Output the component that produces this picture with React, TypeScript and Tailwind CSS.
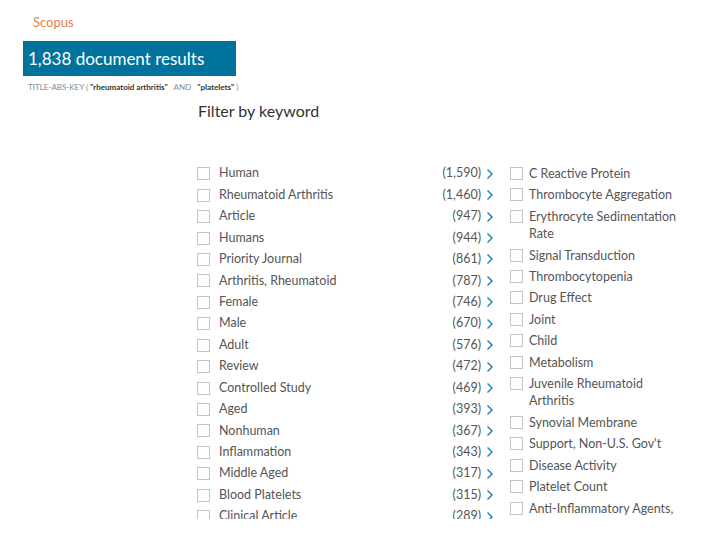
import React from "react";

const left: [string, string][] = [
  ["Human", "(1,590)"],
  ["Rheumatoid Arthritis", "(1,460)"],
  ["Article", "(947)"],
  ["Humans", "(944)"],
  ["Priority Journal", "(861)"],
  ["Arthritis, Rheumatoid", "(787)"],
  ["Female", "(746)"],
  ["Male", "(670)"],
  ["Adult", "(576)"],
  ["Review", "(472)"],
  ["Controlled Study", "(469)"],
  ["Aged", "(393)"],
  ["Nonhuman", "(367)"],
  ["Inflammation", "(343)"],
  ["Middle Aged", "(317)"],
  ["Blood Platelets", "(315)"],
  ["Clinical Article", "(289)"],
];

const right: string[][] = [
  ["C Reactive Protein"],
  ["Thrombocyte Aggregation"],
  ["Erythrocyte Sedimentation", "Rate"],
  ["Signal Transduction"],
  ["Thrombocytopenia"],
  ["Drug Effect"],
  ["Joint"],
  ["Child"],
  ["Metabolism"],
  ["Juvenile Rheumatoid", "Arthritis"],
  ["Synovial Membrane"],
  ["Support, Non-U.S. Gov't"],
  ["Disease Activity"],
  ["Platelet Count"],
  ["Anti-Inflammatory Agents,", "Non-Steroidal"],
];

function Box() {
  return <span className="block w-[13px] h-[13px] border border-[#c4c4c4] bg-white shrink-0" />;
}

function Chevron() {
  return (
    <svg width="8" height="12" viewBox="0 0 8 12" className="shrink-0">
      <polyline points="1.5,1.5 6,6 1.5,10.5" fill="none" stroke="#1b7fa3" strokeWidth="1.4" />
    </svg>
  );
}

export default function App() {
  return (
    <div className="w-[720px] h-[540px] bg-white overflow-hidden text-[#555]" style={{ fontFamily: "Lato, 'Open Sans', sans-serif" }}>
      <div className="pl-[33px] pt-[13px] text-[13px] leading-[18px] text-[#e0834a]">Scopus</div>
      <div className="ml-[23px] mt-[10px] w-[213px] h-[35px] bg-[#00739c] flex items-center pl-[5px] text-white text-[17px]">
        1,838 document results
      </div>
      <div className="ml-[28px] mt-[6px] text-[8px] leading-[10px] text-[#888] whitespace-pre">
        TITLE-ABS-KEY ( <span className="text-[#333] font-bold">"rheumatoid arthritis"</span>   AND   <span className="text-[#333] font-bold">"platelets"</span> )
      </div>
      <div className="ml-[198px] mt-[9px] text-[16px] leading-[20px] text-[#333]">Filter by keyword</div>
      <div className="ml-[197px] mt-[42px] h-[356px] overflow-hidden flex">
        <div className="w-[300px] flex flex-col">
          {left.map(([name, count]) => (
            <div key={name} className="h-[21.45px] flex items-center text-[12.5px] shrink-0">
              <Box />
              <span className="ml-[9px] flex-1">{name}</span>
              <span>{count}</span>
              <span className="ml-[5px] mr-[3px]"><Chevron /></span>
            </div>
          ))}
        </div>
        <div className="ml-[13px] flex flex-col">
          {right.map((lines) => (
            <div key={lines[0]} className="flex items-start py-[2px] text-[12.5px] leading-[17.4px] shrink-0">
              <span className="mt-[2px]"><Box /></span>
              <span className="ml-[6px] whitespace-nowrap">
                {lines.map((l, i) => (
                  <span key={i} className="block">{l}</span>
                ))}
              </span>
            </div>
          ))}
        </div>
      </div>
    </div>
  );
}
